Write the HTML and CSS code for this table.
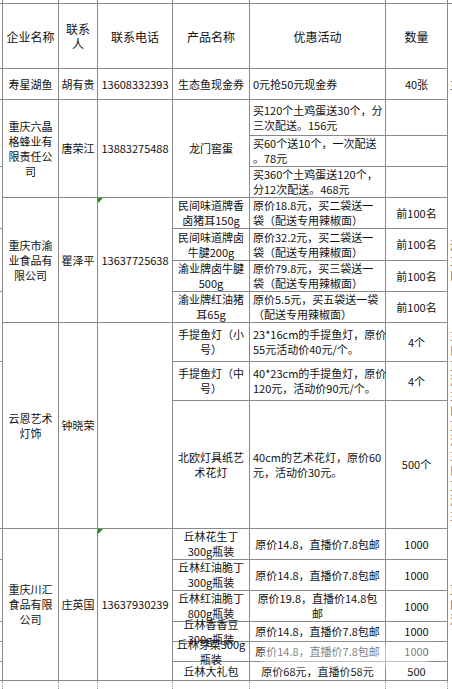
FILE: index.html
```html
<!DOCTYPE html>
<html lang="zh-CN">
<head>
<meta charset="utf-8">
<title>企业优惠活动表</title>
<link rel="stylesheet" href="styles.css">
</head>
<body>
<div class="sheet">
<table class="grid">
<colgroup>
<col class="c0"><col class="c1"><col class="c2"><col class="c3"><col class="c4"><col class="c5"><col class="c6"><col class="c7">
</colgroup>
<tbody>
<tr class="pre"><td class="x"></td><td></td><td></td><td></td><td></td><td></td><td></td><td class="edge"></td></tr>
<tr class="head">
<th class="x"></th><th>企业名称</th><th>联系<br>人</th><th>联系电话</th><th>产品名称</th><th>优惠活动</th><th>数量</th><th class="edge edge-top"></th>
</tr>
<tr class="h31">
<td class="x"></td><td>寿星湖鱼</td><td>胡有贵</td><td>13608332393</td><td>生态鱼现金券</td><td class="offer">0元抢50元现金券</td><td>40张</td><td class="edge dark">主播</td>
</tr>
<tr class="h36">
<td class="x" rowspan="2"></td>
<td rowspan="3">重庆六晶<br>格蜂业有<br>限责任公<br>司</td>
<td rowspan="3">唐荣江</td>
<td rowspan="3">13883275488</td>
<td rowspan="3">龙门窖蛋</td>
<td class="offer">买120个土鸡蛋送30个，分<br>三次配送。156元</td>
<td></td>
<td class="edge" rowspan="3"></td>
</tr>
<tr class="h30">
<td class="offer">买60个送10个，一次配送<br>。78元</td>
<td></td>
</tr>
<tr class="h31">
<td class="x" rowspan="2"></td>
<td class="offer">买360个土鸡蛋送120个，<br>分12次配送。468元</td>
<td></td>
</tr>
<tr class="h31">
<td rowspan="4">重庆市渝<br>业食品有<br>限公司</td>
<td rowspan="4">瞿泽平</td>
<td rowspan="4" class="flag">13637725638</td>
<td>民间味道牌香<br>卤猪耳150g</td>
<td class="offer">原价18.8元，买二袋送一<br>袋（配送专用辣椒面）</td>
<td>前100名</td>
<td class="edge brown" rowspan="4">渝业<br>主播<br>口播</td>
</tr>
<tr class="h32">
<td class="x" rowspan="2"></td>
<td>民间味道牌卤<br>牛腱200g</td>
<td class="offer">原价32.2元，买二袋送一<br>袋（配送专用辣椒面）</td>
<td>前100名</td>
</tr>
<tr class="h31">
<td>渝业牌卤牛腱<br>500g</td>
<td class="offer">原价79.8元，买三袋送一<br>袋（配送专用辣椒面）</td>
<td>前100名</td>
</tr>
<tr class="h31">
<td class="x" rowspan="2"></td>
<td>渝业牌红油猪<br>耳65g</td>
<td class="offer">原价5.5元，买五袋送一袋<br>（配送专用辣椒面）</td>
<td>前100名</td>
</tr>
<tr class="h39">
<td rowspan="3">云恩艺术<br>灯饰</td>
<td rowspan="3">钟晓荣</td>
<td rowspan="3"></td>
<td>手提鱼灯（小<br>号）</td>
<td class="offer">23*16cm的手提鱼灯，原价<br>55元活动价40元/个。</td>
<td>4个</td>
<td class="edge mixed" rowspan="3">主播<br>口播<br>直播<br>活动<br>主播<br>口播<br>直播<br>活动<br>主播<br>口播<br>直播<br>活动<br>主播</td>
</tr>
<tr class="h39">
<td class="x" rowspan="2"></td>
<td>手提鱼灯（中<br>号）</td>
<td class="offer">40*23cm的手提鱼灯，原价<br>120元，活动价90元/个。</td>
<td>4个</td>
</tr>
<tr class="h128">
<td>北欧灯具纸艺<br>术花灯</td>
<td class="offer">40cm的艺术花灯，原价60<br>元，活动价30元。</td>
<td>500个</td>
</tr>
<tr class="h31">
<td class="x"></td>
<td rowspan="6">重庆川汇<br>食品有限<br>公司</td>
<td rowspan="6">庄英国</td>
<td rowspan="6" class="flag">13637930239</td>
<td>丘林花生丁<br>300g瓶装</td>
<td>原价14.8，直播价7.8包邮</td>
<td>1000</td>
<td class="edge brown" rowspan="6">直播<br>口播<br>活动</td>
</tr>
<tr class="h31">
<td class="x" rowspan="2"></td>
<td>丘林红油脆丁<br>300g瓶装</td>
<td>原价14.8，直播价7.8包邮</td>
<td>1000</td>
</tr>
<tr class="h31">
<td>丘林红油脆丁<br>800g瓶装</td>
<td>原价19.8，直播价14.8包<br>邮</td>
<td>1000</td>
</tr>
<tr class="h20">
<td class="x"></td>
<td><div class="squeeze"><span>丘林香香豆<br>300g瓶装</span></div></td>
<td>原价14.8，直播价7.8包邮</td>
<td>1000</td>
</tr>
<tr class="h20">
<td class="x"></td>
<td><div class="squeeze"><span>丘林芽菜300g<br>瓶装</span></div></td>
<td>原价14.8，直播价7.8包邮</td>
<td>1000</td>
</tr>
<tr class="h19">
<td class="x"></td>
<td>丘林大礼包</td>
<td>原价68元，直播价58元</td>
<td>500</td>
</tr>
<tr class="tail"><td class="x"></td><td></td><td></td><td></td><td></td><td></td><td></td><td class="edge"></td></tr>
</tbody>
</table>
<div class="wm"></div>
</div>
</body>
</html>
```
FILE: styles.css
```css
html, body {
  margin: 0;
  padding: 0;
  background: #ffffff;
}

.sheet {
  position: relative;
  width: 452px;
  height: 689px;
  overflow: hidden;
  background: #ffffff;
}

.grid {
  border-collapse: collapse;
  table-layout: fixed;
  width: 545px;
  margin-left: -38px;
  font-family: "Noto Sans CJK SC", "Noto Sans", sans-serif;
  font-size: 11px;
  line-height: 15px;
  color: #111111;
}

.c0 { width: 40px; }
.c1 { width: 56px; }
.c2 { width: 39px; }
.c3 { width: 75px; }
.c4 { width: 77px; }
.c5 { width: 136px; }
.c6 { width: 62px; }
.c7 { width: 60px; }

.grid td,
.grid th {
  border: 1px solid #8a8a8a;
  padding: 0 1px;
  text-align: center;
  vertical-align: middle;
  white-space: nowrap;
  overflow: visible;
  font-weight: normal;
}

.grid th {
  font-size: 12px;
}

.grid .offer {
  text-align: left;
  padding-left: 3px;
}

.pre td {
  height: 3px;
  padding: 0;
  border-top: none;
  line-height: 0;
}

.head th { height: 64px; }
.h19 td { height: 18px; }
.h20 td { height: 19px; }
.h30 td { height: 29px; }
.h31 td { height: 30px; }
.h32 td { height: 31px; }
.h36 td { height: 35px; }
.h39 td { height: 38px; }
.h128 td { height: 127px; }

.squeeze {
  height: 19px;
  display: flex;
  align-items: center;
  justify-content: center;
  overflow: visible;
}

.squeeze span {
  display: block;
  white-space: nowrap;
}

.grid .edge {
  border-top: none;
  border-bottom: none;
  border-right: none;
  text-align: left;
  padding-left: 2px;
}

.grid .edge-top {
  border-top: 1px solid #8a8a8a;
}

.edge.dark { color: #222222; }
.edge.brown { color: #8a4a2a; }
.edge.mixed { color: #a0603a; }

.flag {
  position: relative;
}

.flag::before {
  content: "";
  position: absolute;
  left: 0;
  top: 0;
  border-top: 5px solid #1f8a1f;
  border-right: 5px solid transparent;
}

.tail td {
  height: 10px;
  padding: 0;
  border-top: none;
  border-bottom: none;
  border-left: 1px dotted #9a9a9a;
  border-right: 1px dotted #9a9a9a;
}

.tail td.edge {
  border-right: none;
}

.wm {
  position: absolute;
  left: 262px;
  top: 644px;
  width: 166px;
  height: 24px;
  background: rgba(255, 255, 255, 0.45);
  filter: blur(2px);
}
```
